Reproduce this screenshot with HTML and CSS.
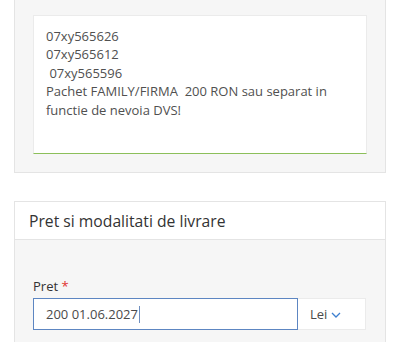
FILE: index.html
```html
<!DOCTYPE html>
<html lang="ro">
<head>
<meta charset="utf-8">
<title>Anunt</title>
<link rel="stylesheet" href="styles.css">
</head>
<body>
<div class="page">
  <section class="card card-top">
    <div class="textarea">
      <div>07xy565626</div>
      <div>07xy565612</div>
      <div>&nbsp;07xy565596</div>
      <div>Pachet FAMILY/FIRMA&nbsp; 200 RON sau separat in functie de nevoia DVS!</div>
    </div>
  </section>

  <section class="card">
    <header class="card-header">Pret si modalitati de livrare</header>
    <div class="card-body">
      <label class="label">Pret <span class="req">*</span></label>
      <div class="price-row">
        <div class="input">200 01.06.2027<span class="caret"></span></div>
        <div class="select">Lei
          <svg class="chev" width="10" height="6" viewBox="0 0 10 6"><path d="M1 1l4 4 4-4" fill="none" stroke="#3d7fd0" stroke-width="1.3"/></svg>
        </div>
      </div>
    </div>
  </section>
</div>
</body>
</html>
```
FILE: styles.css
```css
* { box-sizing: border-box; }
html, body { margin: 0; padding: 0; background: #fff; }
body {
  font-family: "Open Sans", "Noto Sans", sans-serif;
  color: #444;
  font-size: 13px;
  overflow: hidden;
  height: 342px;
}
.page {
  width: 372px;
  margin-left: 14px;
  display: flex;
  flex-direction: column;
  gap: 28px;
}
.card {
  border: 1px solid #e4e4e4;
  background: #f6f6f6;
}
.card-top {
  margin-top: -6px;
  padding: 20px 18px 18px;
}
.textarea {
  background: #fff;
  border: 1px solid #ebebeb;
  border-bottom: 1px solid #8cbf5a;
  height: 139px;
  padding: 11px 30px 6px 12px;
  line-height: 18.4px;
  color: #505050;
}
.card-header {
  background: #fff;
  border-bottom: 1px solid #e4e4e4;
  height: 38px;
  padding: 0 14px;
  display: flex;
  align-items: center;
  font-size: 15.7px;
  color: #333;
}
.card-body {
  padding: 36px 18px 20px;
}
.label {
  display: block;
  color: #333;
  line-height: 20px;
  margin-bottom: 2px;
}
.req { color: #e0322f; }
.price-row {
  display: flex;
  height: 32px;
}
.input {
  flex: 0 0 265px;
  background: #fff;
  border: 1px solid #5d86c2;
  display: flex;
  align-items: center;
  padding-left: 12px;
  color: #4a4a4a;
}
.caret {
  display: inline-block;
  width: 1px;
  height: 17px;
  background: #6f8fbf;
  margin-left: 1px;
}
.select {
  flex: 0 0 68px;
  background: #fff;
  border: 1px solid #ebebeb;
  border-left: none;
  display: flex;
  align-items: center;
  padding-left: 12px;
  gap: 4px;
  color: #4a4a4a;
}
.chev { margin-top: 2px; }
```
